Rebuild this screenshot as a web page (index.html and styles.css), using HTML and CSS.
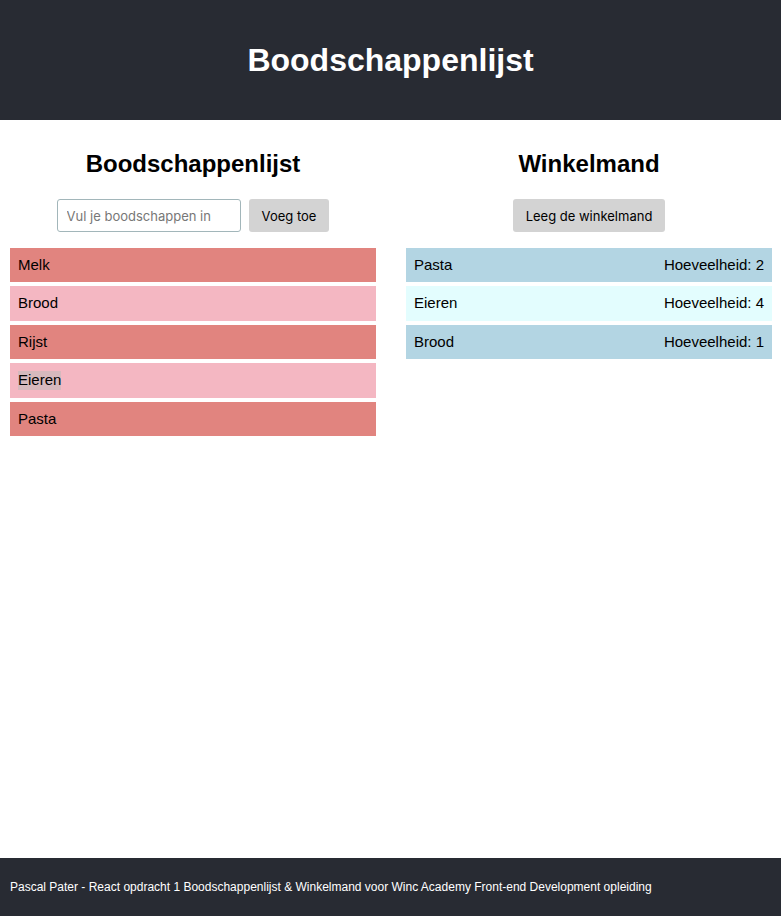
FILE: index.html
```html
<!DOCTYPE html>
<html lang="nl">
<head>
<meta charset="utf-8">
<title>Boodschappenlijst</title>
<link rel="stylesheet" href="styles.css">
</head>
<body>
<div class="app">
  <header class="app-header">
    <h1>Boodschappenlijst</h1>
  </header>
  <main class="columns">
    <section class="column">
      <h2>Boodschappenlijst</h2>
      <form class="controls">
        <input class="text-input" type="text" placeholder="Vul je boodschappen in">
        <button class="btn" type="button">Voeg toe</button>
      </form>
      <ul class="list">
        <li class="item red">Melk</li>
        <li class="item pink">Brood</li>
        <li class="item red">Rijst</li>
        <li class="item pink"><span class="hl">Eieren</span></li>
        <li class="item red">Pasta</li>
      </ul>
    </section>
    <section class="column">
      <h2>Winkelmand</h2>
      <div class="controls">
        <button class="btn" type="button">Leeg de winkelmand</button>
      </div>
      <ul class="list">
        <li class="item blue"><span>Pasta</span><span>Hoeveelheid: 2</span></li>
        <li class="item cyan"><span>Eieren</span><span>Hoeveelheid: 4</span></li>
        <li class="item blue"><span>Brood</span><span>Hoeveelheid: 1</span></li>
      </ul>
    </section>
  </main>
  <footer class="app-footer">
    Pascal Pater - React opdracht 1 Boodschappenlijst &amp; Winkelmand voor Winc Academy Front-end Development opleiding
  </footer>
</div>
</body>
</html>
```

FILE: styles.css
```css
* { box-sizing: border-box; }
html, body { margin: 0; padding: 0; }
body {
  font-family: "Liberation Sans", Arial, sans-serif;
  color: #000;
  background: #fff;
}
.app {
  min-height: 100vh;
  display: flex;
  flex-direction: column;
}
.app-header {
  background: #282b33;
  height: 120px;
  display: flex;
  align-items: center;
  justify-content: center;
}
.app-header h1 {
  margin: 0;
  color: #fff;
  font-size: 32px;
  font-weight: bold;
}
.columns {
  flex: 1;
  display: grid;
  grid-template-columns: 366px 366px;
  column-gap: 30px;
  padding: 0 10px;
  align-items: start;
}
.column h2 {
  margin: 30px 0 21px;
  text-align: center;
  font-size: 24px;
  font-weight: bold;
}
.controls {
  display: flex;
  justify-content: center;
  gap: 8px;
  margin: 0 0 16px;
}
.text-input {
  width: 184px;
  height: 33px;
  border: 1px solid #a2b6ba;
  border-radius: 3px;
  padding: 0 9px;
  font-family: Inter, "Noto Sans", sans-serif;
  font-size: 13px;
  color: #000;
}
.text-input::placeholder { color: #777; }
.btn {
  height: 33px;
  border: none;
  border-radius: 3px;
  background: #d3d3d3;
  padding: 0 13px;
  font-family: Inter, "Noto Sans", sans-serif;
  font-size: 13px;
  color: #000;
}
.list {
  list-style: none;
  margin: 0;
  padding: 0;
}
.item {
  display: flex;
  justify-content: space-between;
  padding: 8px;
  margin-bottom: 4px;
  font-size: 15px;
  line-height: 18.4px;
}
.red { background: #e1847f; }
.pink { background: #f4b7c2; }
.blue { background: #b3d5e3; }
.cyan { background: #e3fdfe; }
.hl { background: #d6b9bd; }
.app-footer {
  background: #282b33;
  color: #fff;
  height: 58px;
  display: flex;
  align-items: center;
  padding: 0 10px;
  font-size: 12px;
}
```
